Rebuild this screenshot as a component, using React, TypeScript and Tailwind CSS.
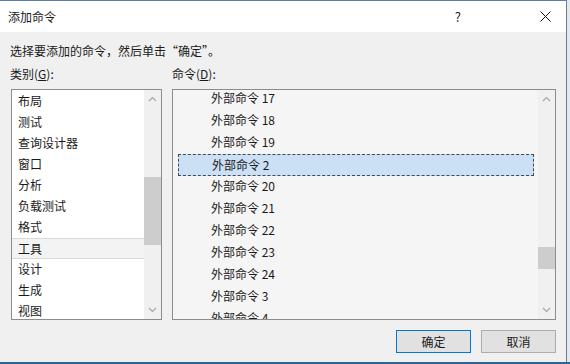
import React from 'react';

const FONT = '"Noto Sans CJK SC", "Noto Sans", sans-serif';

const Chevron = ({ up }: { up?: boolean }) => (
  <svg width="9" height="6" viewBox="0 0 9 6" className="block">
    <path
      d={up ? 'M1 5 L4.5 1.5 L8 5' : 'M1 1 L4.5 4.5 L8 1'}
      fill="none"
      stroke="#a6a6a6"
      strokeWidth="1.2"
    />
  </svg>
);

const ScrollBar = ({ thumbTop, thumbHeight }: { thumbTop: number; thumbHeight: number }) => (
  <div className="relative w-[17px] h-full bg-[#f0f0f0] shrink-0">
    <div className="absolute top-[6px] left-[4px]">
      <Chevron up />
    </div>
    <div
      className="absolute left-0 w-[17px] bg-[#cdcdcd]"
      style={{ top: thumbTop, height: thumbHeight }}
    />
    <div className="absolute bottom-[6px] left-[4px]">
      <Chevron />
    </div>
  </div>
);

const App = () => {
  const categories = ['布局', '测试', '查询设计器', '窗口', '分析', '负载测试', '格式', '工具', '设计', '生成', '视图'];
  const commands = ['17', '18', '19', '2', '20', '21', '22', '23', '24', '3', '4'];

  return (
    <div className="w-[570px] h-[364px] bg-[#e8e8e8] flex flex-col overflow-hidden" style={{ fontFamily: FONT }}>
      <div className="w-[567px] h-[362px] flex flex-col bg-[#f0f0f0] border-t border-r border-[#5b7fa8]">
        {/* Title bar */}
        <div className="h-[31px] bg-white flex items-center shrink-0">
          <span className="ml-[8px] text-[12px] text-[#1a1a1a]">添加命令</span>
          <span className="ml-auto text-[13px] text-[#1a1a1a] mr-[79px]">?</span>
          <svg width="11" height="11" viewBox="0 0 11 11" className="mr-[15px]">
            <path d="M0.5 0.5 L10.5 10.5 M10.5 0.5 L0.5 10.5" stroke="#111" strokeWidth="1" />
          </svg>
        </div>

        {/* Body */}
        <div className="flex flex-col px-[10px] text-[12px] text-[#1a1a1a]">
          <div className="mt-[11px] h-[16px] leading-[16px]">选择要添加的命令，然后单击“确定”。</div>
          <div className="mt-[7px] h-[16px] leading-[16px] flex">
            <span className="w-[162px]">
              类别(<span className="underline">G</span>):
            </span>
            <span>
              命令(<span className="underline">D</span>):
            </span>
          </div>

          <div className="mt-[7px] flex gap-[10px] h-[231px]">
            {/* Category list */}
            <div className="ml-[1px] w-[151px] h-full border border-[#8c8c8c] bg-white flex overflow-hidden">
              <div className="flex-1 pt-[1px] overflow-hidden">
                {categories.map((c) => (
                  <div
                    key={c}
                    className={`h-[21px] leading-[21px] pl-[6px] ${
                      c === '工具' ? 'bg-[#f3f3f3] border-y border-[#dadada] leading-[19px]' : ''
                    }`}
                  >
                    <span className="relative -top-[1px]">{c}</span>
                  </div>
                ))}
              </div>
              <ScrollBar thumbTop={87} thumbHeight={68} />
            </div>

            {/* Command list */}
            <div className="w-[384px] h-full border border-[#8c8c8c] bg-[#f5f5f5] flex overflow-hidden">
              <div className="flex-1 -mt-[2px] pl-[5px] pr-[4px] overflow-hidden">
                {commands.map((n) => (
                  <div
                    key={n}
                    className={`h-[22px] leading-[22px] pl-[33px] ${
                      n === '2' ? 'bg-[#cce0f5] border border-dashed border-[#3c4a5c] leading-[20px] pl-[32px]' : ''
                    }`}
                  >
                    <span className="relative -top-[1px]">外部命令 {n}</span>
                  </div>
                ))}
              </div>
              <ScrollBar thumbTop={157} thumbHeight={22} />
            </div>
          </div>

          {/* Buttons */}
          <div className="mt-[10px] flex justify-end gap-[10px]">
            <button className="w-[75px] h-[23px] bg-[#e1e1e1] border border-[#0078d7] text-[12px] text-[#1a1a1a]">
              确定
            </button>
            <button className="w-[75px] h-[23px] bg-[#e1e1e1] border border-[#adadad] text-[12px] text-[#1a1a1a]">
              取消
            </button>
          </div>
        </div>
      </div>
      <div className="h-[2px] bg-[#2f6497]" />
    </div>
  );
};

export default App;
